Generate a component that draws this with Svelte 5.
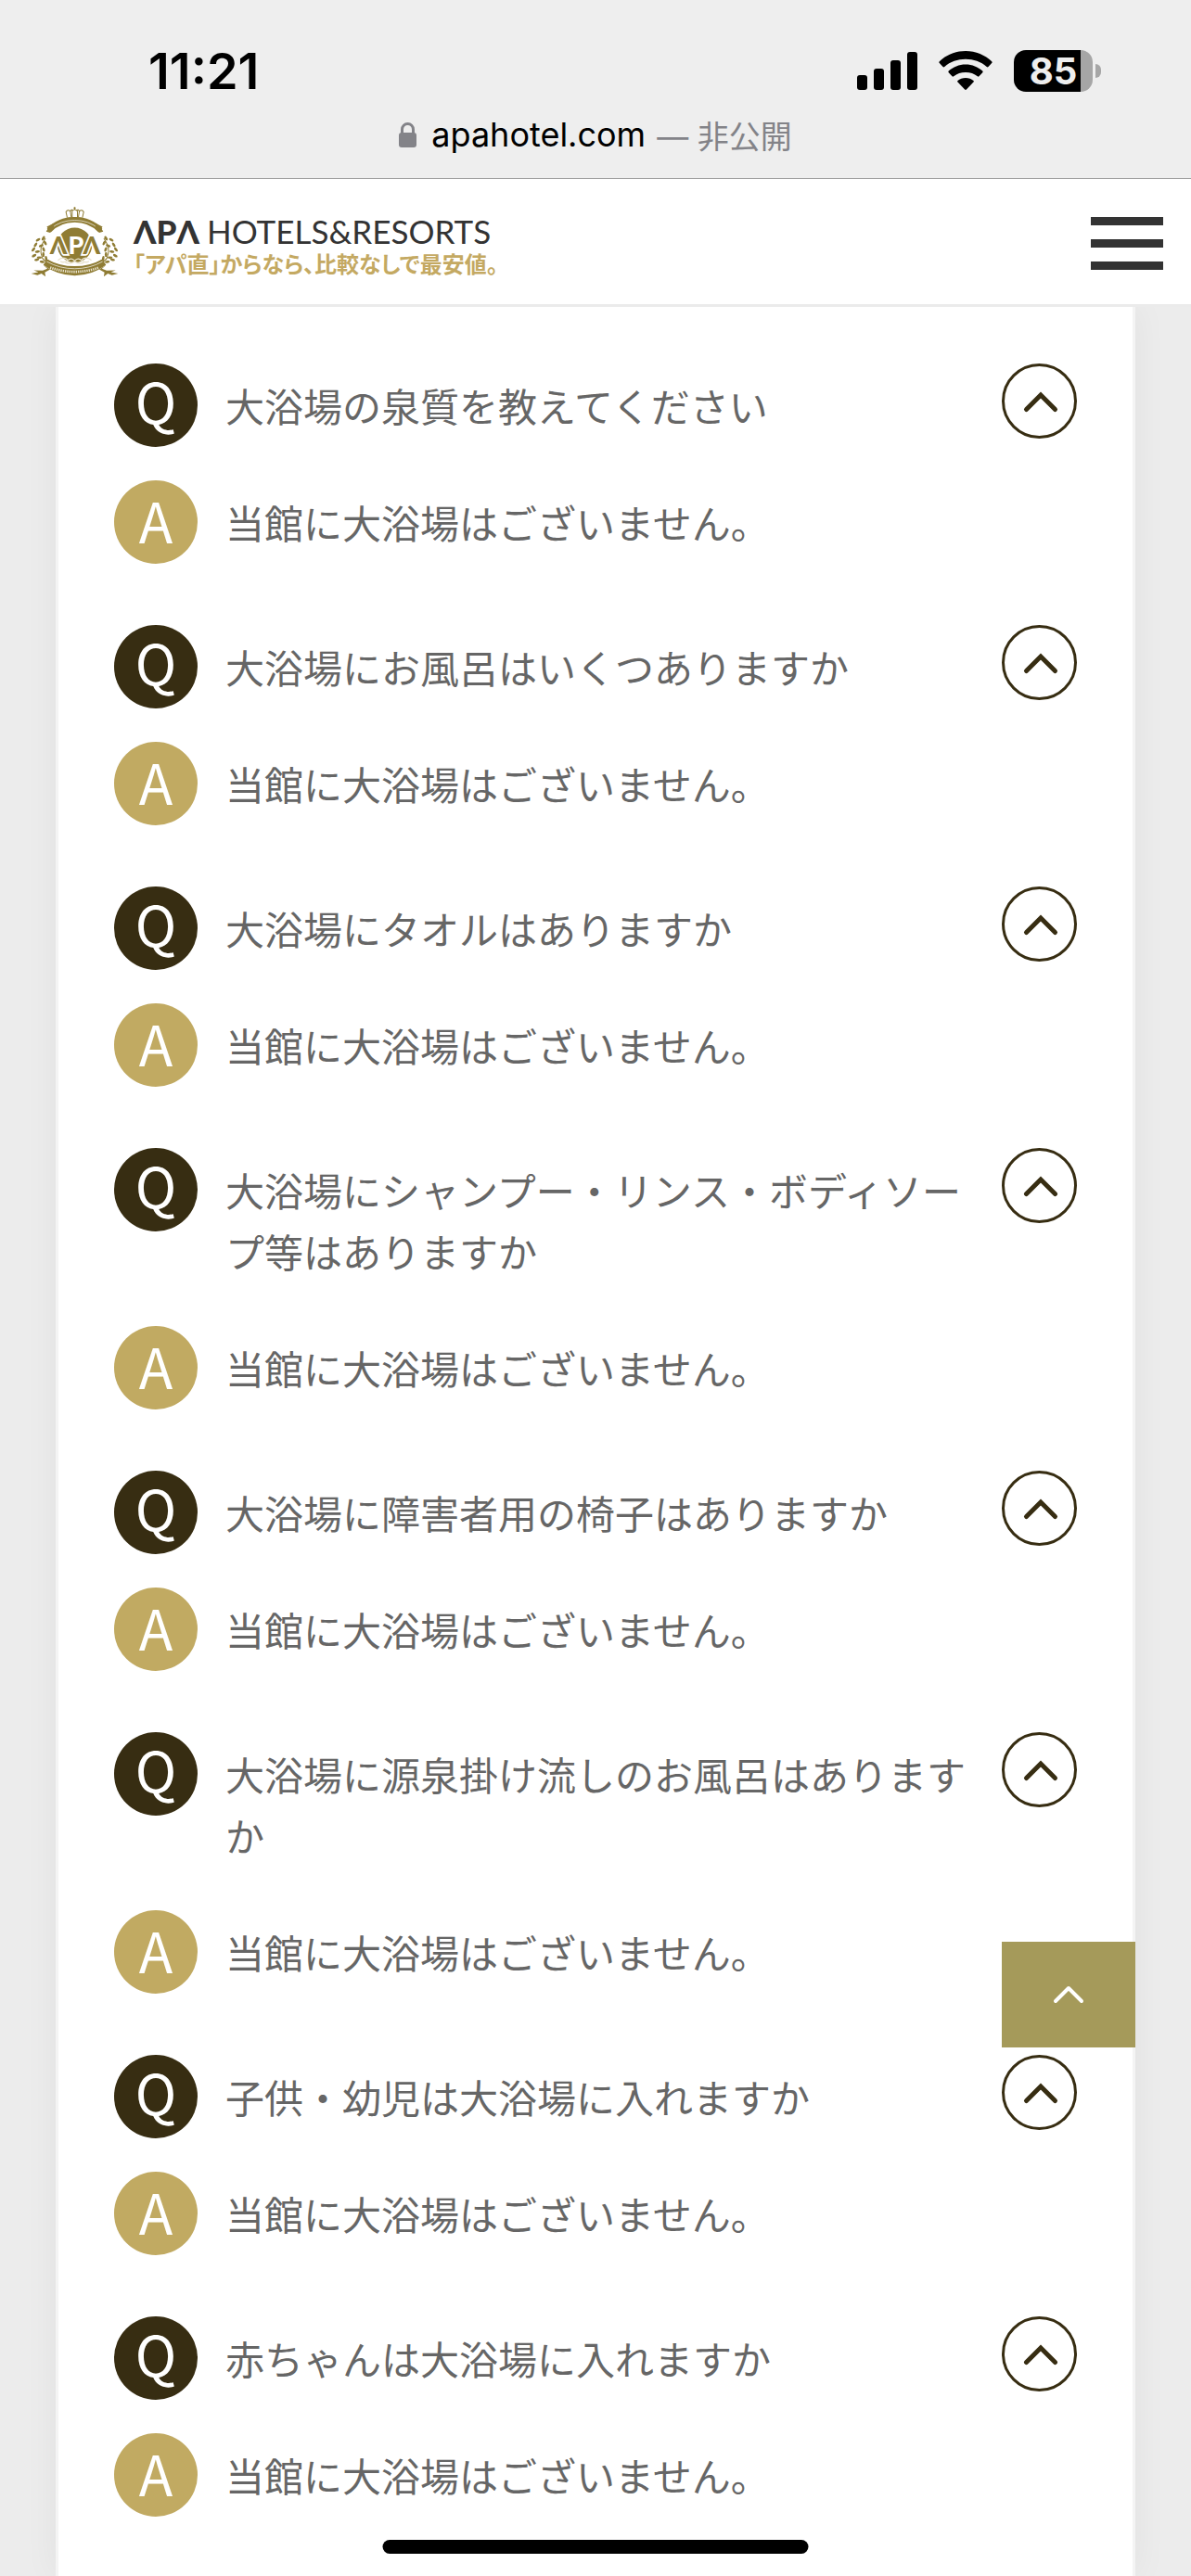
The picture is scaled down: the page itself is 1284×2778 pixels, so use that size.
<script>
  const respuesta = "当館に大浴場はございません。";

  let faqs = $state([
    { q: "大浴場の泉質を教えてください", a: respuesta, open: true },
    { q: "大浴場にお風呂はいくつありますか", a: respuesta, open: true },
    { q: "大浴場にタオルはありますか", a: respuesta, open: true },
    {
      q: "大浴場にシャンプー・リンス・ボディソープ等はありますか",
      a: respuesta,
      open: true,
    },
    { q: "大浴場に障害者用の椅子はありますか", a: respuesta, open: true },
    {
      q: "大浴場に源泉掛け流しのお風呂はありますか",
      a: respuesta,
      open: true,
    },
    { q: "子供・幼児は大浴場に入れますか", a: respuesta, open: true },
    { q: "赤ちゃんは大浴場に入れますか", a: respuesta, open: true },
  ]);

  function scrollTop() {
    window.scrollTo({ top: 0, behavior: "smooth" });
  }
</script>

<div class="page">
  <div class="browser-bar">
    <div class="status">
      <span class="time">11:21</span>
      <div class="status-icons">
        <svg class="signal" viewBox="0 0 65 41" aria-hidden="true">
          <rect x="0" y="25" width="11" height="16" rx="3" />
          <rect x="18" y="18" width="11" height="23" rx="3" />
          <rect x="36" y="9" width="11" height="32" rx="3" />
          <rect x="54" y="0" width="11" height="41" rx="3" />
        </svg>
        <svg class="wifi" viewBox="0 0 58 42" aria-hidden="true">
          <path
            d="M29 0C18 0 8 4.300 .800 11.300Q0 12.200 .800 13L4.500 17Q5.400 17.900 6.300 17C12.500 11.500 20.500 8.800 29 8.800S45.500 11.500 51.700 17Q52.600 17.900 53.500 17L57.200 13Q58 12.200 57.200 11.300C50 4.300 40 0 29 0Z"
          />
          <path
            d="M29 14.500C22 14.500 15.500 17.200 10.700 21.600Q9.900 22.400 10.700 23.300L14.500 27.300Q15.300 28.100 16.200 27.300C19.700 24.500 24 23 29 23S38.300 24.500 41.800 27.300Q42.700 28.100 43.500 27.300L47.300 23.300Q48.100 22.400 47.300 21.600C42.500 17.200 36 14.500 29 14.500Z"
          />
          <path
            d="M29 29C25.700 29 22.800 30 20.500 31.900Q19.700 32.700 20.500 33.600L28.100 41.500Q29 42.300 29.900 41.500L37.500 33.600Q38.300 32.700 37.500 31.900C35.200 30 32.300 29 29 29Z"
          />
        </svg>
        <div class="battery">
          <div class="battery-body"><span>85</span></div>
          <div class="battery-tip"></div>
        </div>
      </div>
    </div>
    <div class="address">
      <svg class="lock" viewBox="0 0 19 27" aria-hidden="true">
        <path d="M3.500 13V7.500a6 6 0 0 1 12 0V13" />
        <rect x="0" y="11" width="19" height="16" rx="3" />
      </svg>
      <span class="host">apahotel.com</span>
      <span class="private">— 非公開</span>
    </div>
  </div>

  <header>
    <a class="logo" href="/" aria-label="APA HOTELS & RESORTS">
      <svg class="emblem" viewBox="38 36 284 232" aria-hidden="true">
        <circle cx="180" cy="162" r="56" class="fill" />
        <!-- crown -->
        <g class="line">
          <path d="M156 73L152 55Q158 45 166 53L169 72M205 73L209 55Q203 45 195 53L192 72M172 72V52Q180 42 189 52V72M166 53Q170 45 174 50M195 53Q191 45 187 50M180 47V39M176 42H184" />
          <path d="M156 76Q180 71 204 76" stroke-width="5" />
        </g>
        <!-- top ribbon -->
        <path class="band" d="M97 115Q129 80 180 80T263 115" />
        <path class="stripe" d="M103 109Q134 82 180 82T257 109" />
        <path class="fill" d="M111 92L90 103L94 108L88 118L101 122L114 103ZM249 92L270 103L266 108L272 118L259 122L246 103Z" />
        <!-- laurel -->
        <g class="line">
          <path d="M86 140Q62 172 76 204Q84 216 100 219M274 140Q298 172 284 204Q276 216 260 219" />
        </g>
        <g class="fill">
          {#each [[79, 140, 30], [62, 145, 60], [85, 155, -30], [54, 161, 35], [72, 164, 70], [47, 176, 40], [80, 176, -20], [60, 183, 80], [49, 196, 60], [79, 192, 0], [66, 202, 90], [88, 205, -10], [75, 216, 100], [91, 216, 30], [58, 209, 80]] as [x, y, r]}
            <ellipse cx={x} cy={y} rx="4" ry="8" transform="rotate({r} {x} {y})" />
            <ellipse
              cx={360 - x}
              cy={y}
              rx="4"
              ry="8"
              transform="rotate({-r} {360 - x} {y})"
            />
          {/each}
        </g>
        <!-- initials: the outer two keep a white edge against the disc -->
        <text class="edge" x="128" y="191" text-anchor="middle">Λ</text>
        <text class="edge" x="235" y="191" text-anchor="middle">Λ</text>
        <text class="center" x="184" y="191" text-anchor="middle">P</text>
        <g class="scroll">
          <path d="M126 211Q143 196 158 210Q146 222 134 214M234 211Q217 196 202 210Q214 222 226 214M158 212Q169 200 180 213Q191 200 202 212M150 218Q165 224 180 215Q195 224 210 218" />
        </g>
        <!-- lower ribbon -->
        <path class="fill" d="M91 207L79 226Q125 260 180 260T281 226L269 207Q229 230 180 230T91 207Z" />
        <path class="stripe" d="M90 215Q132 238 180 238T270 215" />
        <path class="motto" d="M101 234Q140 248 180 248T259 234" />
        <path class="fill" d="M79 227L101 240L84 250L86 263L73 254L60 259L40 254L63 249L48 243L77 244L92 238ZM281 227L259 240L276 250L274 263L287 254L300 259L320 254L297 249L312 243L283 244L268 238Z" />
      </svg>
      <span class="logo-text">
        <span class="brand"><b>ΛPΛ</b> <span>HOTELS&amp;RESORTS</span></span>
        <span class="tagline">「アパ直」からなら、比較なしで最安値。</span>
      </span>
    </a>
    <button class="menu" aria-label="メニュー">
      <span></span>
      <span></span>
      <span></span>
    </button>
  </header>

  <main>
    {#each faqs as faq (faq.q)}
      <section>
        <div class="row">
          <span class="badge question">Q</span>
          <p>{faq.q}</p>
          <button
            class="toggle"
            class:closed={!faq.open}
            aria-label="回答を開閉"
            aria-expanded={faq.open}
            onclick={() => (faq.open = !faq.open)}
          >
            <svg viewBox="0 0 75 75" aria-hidden="true">
              <path d="M23.500 46.500L39 31L54.500 46.500" />
            </svg>
          </button>
        </div>
        {#if faq.open}
          <div class="row">
            <span class="badge answer">A</span>
            <p>{faq.a}</p>
          </div>
        {/if}
      </section>
    {/each}
  </main>

  <button class="page-top" aria-label="ページトップへ" onclick={scrollTop}>
    <svg viewBox="0 0 36 24" aria-hidden="true">
      <path d="M4 19L18 5L32 19" />
    </svg>
  </button>
  <div class="home-indicator"></div>
</div>

<style>
  :global(body) {
    background: #ececec;
  }

  .page {
    min-height: 100vh;
    display: flex;
    flex-direction: column;
    overflow: hidden;
    font-family: "Noto Sans CJK JP", sans-serif;
    color: #666;
  }

  button {
    padding: 0;
    border: none;
    background: none;
    cursor: pointer;
  }

  .browser-bar {
    display: flex;
    flex-direction: column;
    gap: 16px;
    padding: 45px 0 25px;
    background: #eee;
    border-bottom: 1px solid #a0a0a0;
    font-family: Inter, "Noto Sans CJK JP", sans-serif;
    color: #000;
  }

  .status {
    display: flex;
    justify-content: space-between;
    align-items: center;
    height: 62px;
    padding: 0 97px 0 160px;
  }

  .time {
    font-size: 54px;
    font-weight: 600;
  }

  .status-icons {
    display: flex;
    align-items: center;
    gap: 23px;
  }

  .signal {
    width: 65px;
    height: 41px;
  }

  .wifi {
    width: 58px;
    height: 42px;
  }

  .battery {
    display: flex;
    align-items: center;
    gap: 3px;
  }

  .battery-body {
    display: flex;
    justify-content: center;
    align-items: center;
    width: 85px;
    height: 45px;
    border-radius: 13px;
    background: linear-gradient(to right, #000 72px, #a6a6a6 72px);
    color: #eee;
    font-size: 40px;
    font-weight: 700;
  }

  .battery-tip {
    width: 6px;
    height: 15px;
    border-radius: 0 6px 6px 0;
    background: #a6a6a6;
  }

  .address {
    display: flex;
    justify-content: center;
    align-items: center;
    height: 44px;
    font-size: 36px;
  }

  .lock {
    width: 19px;
    height: 27px;
    margin-right: 16px;
    fill: #838388;
  }

  .lock path {
    fill: none;
    stroke: #838388;
    stroke-width: 3;
  }

  .private {
    margin-left: 12px;
    color: #838388;
    font-size: 34px;
  }

  header {
    position: relative;
    z-index: 1;
    display: flex;
    justify-content: space-between;
    align-items: center;
    height: 135px;
    padding: 0 30px 0 33px;
    background: #fff;
    border-bottom: 3px solid #ebebeb;
  }

  .logo {
    display: flex;
    align-items: center;
    gap: 16px;
    text-decoration: none;
  }

  .emblem {
    width: 95px;
    height: 78px;
  }

  .emblem .fill {
    fill: #8f7c34;
  }

  .emblem .line {
    fill: none;
    stroke: #8f7c34;
    stroke-width: 3;
  }

  .emblem .band {
    fill: none;
    stroke: #8f7c34;
    stroke-width: 17;
  }

  .emblem .stripe {
    fill: none;
    stroke: #fff;
    stroke-width: 2;
  }

  .emblem .motto {
    fill: none;
    stroke: #e8e2cc;
    stroke-width: 8;
    stroke-dasharray: 4 3;
  }

  .emblem .scroll {
    fill: none;
    stroke: #e8e2cc;
    stroke-width: 4;
  }

  .emblem text {
    font-family: Lato, sans-serif;
    font-size: 80px;
    font-weight: 900;
  }

  .emblem .edge {
    fill: #8f7c34;
    stroke: #fff;
    stroke-width: 10;
    paint-order: stroke;
  }

  .emblem .center {
    fill: #fff;
  }

  .logo-text {
    display: flex;
    flex-direction: column;
    padding-top: 8px;
  }

  .brand {
    display: flex;
    gap: 8px;
    color: #333;
    font-family: Lato, sans-serif;
    font-size: 35px;
    line-height: 38px;
  }

  .brand b {
    font-weight: 900;
  }

  .tagline {
    color: #c4a962;
    font-size: 24px;
    font-weight: 700;
    line-height: 32px;
    font-feature-settings: "palt";
  }

  .menu {
    display: flex;
    flex-direction: column;
    gap: 15px;
    width: 78px;
    padding-top: 4px;
  }

  .menu span {
    height: 9px;
    background: #333;
  }

  main {
    flex: 1;
    display: flex;
    flex-direction: column;
    gap: 60px;
    margin: 0 60px;
    padding: 61px 60px 24px;
    background: #fff;
    border: solid #f4f4f4;
    border-width: 0 3px;
    box-shadow: 0 0 36px rgba(0, 0, 0, 0.05);
  }

  section {
    display: flex;
    flex-direction: column;
    gap: 30px;
  }

  .row {
    display: flex;
    align-items: flex-start;
    gap: 30px;
  }

  .row p {
    flex: 1;
    margin: 0;
    padding: 12px 0 18px;
    font-size: 42px;
    line-height: 66px;
  }

  .badge {
    flex: none;
    width: 90px;
    height: 90px;
    border-radius: 50%;
    color: #fff;
    font-size: 60px;
    line-height: 84px;
    text-align: center;
  }

  .question {
    background: #372d12;
    line-height: 78px;
  }

  .answer {
    background: #c1aa62;
  }

  .toggle {
    flex: none;
    width: 81px;
    height: 81px;
    border: 3px solid #372d12;
    border-radius: 50%;
  }

  .toggle svg {
    display: block;
  }

  .toggle path {
    fill: none;
    stroke: #372d12;
    stroke-width: 5;
    stroke-linecap: round;
  }

  .toggle.closed svg {
    transform: rotate(180deg);
  }

  .page-top {
    position: fixed;
    z-index: 2;
    right: 60px;
    bottom: 570px;
    display: flex;
    justify-content: center;
    align-items: center;
    width: 144px;
    height: 114px;
    background: #a59a5a;
  }

  .page-top svg {
    width: 36px;
    height: 24px;
    fill: none;
    stroke: #fff;
    stroke-width: 4;
    stroke-linecap: round;
    stroke-linejoin: round;
  }

  .home-indicator {
    position: fixed;
    z-index: 3;
    bottom: 24px;
    left: 50%;
    width: 459px;
    height: 15px;
    border-radius: 8px;
    background: #000;
    transform: translateX(-50%);
  }
</style>
